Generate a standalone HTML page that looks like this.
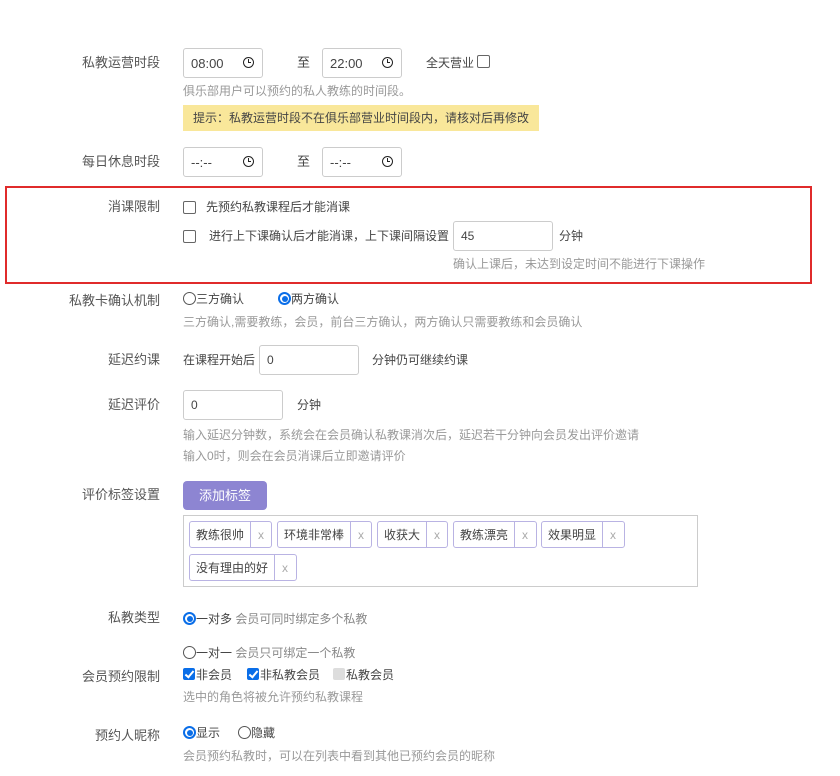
<!DOCTYPE html>
<html><head><meta charset="utf-8"><style>
body{margin:0;width:840px;height:776px;background:#fff;position:relative;overflow:hidden;font-family:"Liberation Sans","Noto Sans CJK SC",sans-serif;color:#444}
.a{position:absolute;white-space:nowrap;line-height:16px}
.l{font-size:13px;color:#555;text-align:right;width:160px;left:0}
.h{font-size:12px;color:#999}
.s{font-size:12px;color:#444}
.in{position:absolute;border:1px solid #ccc;border-radius:3px;box-sizing:border-box;font-size:13px;color:#444;padding-left:7px;display:flex;align-items:center}
.clk{position:absolute;right:8px;top:8px;width:9px;height:9px;border:1.6px solid #222;border-radius:50%}
.clk:after{content:"";position:absolute;left:3.5px;top:1px;width:2.5px;height:3px;border-left:1.5px solid #222;border-bottom:1.5px solid #222}
.cb{position:absolute;width:11px;height:11px;border:1px solid #666;border-radius:2px;background:#fff}
.cbc{position:absolute;width:12px;height:12px;border-radius:2px;background:#0a6ee8}
.cbc:after{content:"";position:absolute;left:4px;top:1px;width:3px;height:7px;border-right:2px solid #fff;border-bottom:2px solid #fff;transform:rotate(40deg)}
.rd{position:absolute;width:11px;height:11px;border:1px solid #555;border-radius:50%;background:#fff}
.rdc{position:absolute;width:9px;height:9px;border:2px solid #0a6ee8;border-radius:50%;background:#fff}
.rdc:after{content:"";position:absolute;left:1.5px;top:1.5px;width:6px;height:6px;border-radius:50%;background:#0a6ee8}
.tag{position:absolute;height:27px;border:1px solid #b9b3e3;border-radius:3px;box-sizing:border-box;font-size:12px;display:flex}
.tag span{padding:0 6px;display:flex;align-items:center;border-right:1px solid #b9b3e3}
.tag i{font-style:normal;color:#aaa;width:20px;display:flex;align-items:center;justify-content:center;font-size:12px}
</style></head><body>

<div class="a l" style="top:55px">私教运营时段</div>
<div class="in" style="left:183px;top:48px;width:80px;height:30px">08:00<div class="clk"></div></div>
<div class="a s" style="left:297px;top:55px;font-size:13px">至</div>
<div class="in" style="left:322px;top:48px;width:80px;height:30px">22:00<div class="clk"></div></div>
<div class="a s" style="left:426px;top:55px;font-size:12px">全天营业</div>
<div class="cb" style="left:477px;top:55px"></div>
<div class="a h" style="left:183px;top:83px">俱乐部用户可以预约的私人教练的时间段。</div>
<div class="a" style="left:183px;top:105px;width:356px;height:26px;background:#f9e79a"></div>
<div class="a s" style="left:193px;top:110px">提示：私教运营时段不在俱乐部营业时间段内，请核对后再修改</div>

<div class="a l" style="top:154px">每日休息时段</div>
<div class="in" style="left:183px;top:147px;width:80px;height:30px">--:--<div class="clk"></div></div>
<div class="a s" style="left:297px;top:154px;font-size:13px">至</div>
<div class="in" style="left:322px;top:147px;width:80px;height:30px">--:--<div class="clk"></div></div>

<div class="a" style="left:5px;top:186px;width:803px;height:94px;border:2px solid #e02b2b"></div>
<div class="a l" style="top:199px">消课限制</div>
<div class="cb" style="left:183px;top:201px"></div>
<div class="a s" style="left:206px;top:199px">先预约私教课程后才能消课</div>
<div class="cb" style="left:183px;top:230px"></div>
<div class="a s" style="left:209px;top:228px">进行上下课确认后才能消课，上下课间隔设置</div>
<div class="in" style="left:453px;top:221px;width:100px;height:30px;font-size:12px">45</div>
<div class="a s" style="left:559px;top:228px">分钟</div>
<div class="a h" style="left:453px;top:256px">确认上课后，未达到设定时间不能进行下课操作</div>

<div class="a l" style="top:293px">私教卡确认机制</div>
<div class="rd" style="left:183px;top:292px"></div>
<div class="a s" style="left:196px;top:291px">三方确认</div>
<div class="rdc" style="left:278px;top:292px"></div>
<div class="a s" style="left:291px;top:291px">两方确认</div>
<div class="a h" style="left:183px;top:314px">三方确认,需要教练，会员，前台三方确认，两方确认只需要教练和会员确认</div>

<div class="a l" style="top:352px">延迟约课</div>
<div class="a s" style="left:183px;top:352px">在课程开始后</div>
<div class="in" style="left:259px;top:345px;width:100px;height:30px;font-size:12px">0</div>
<div class="a s" style="left:372px;top:352px">分钟仍可继续约课</div>

<div class="a l" style="top:397px">延迟评价</div>
<div class="in" style="left:183px;top:390px;width:100px;height:30px;font-size:12px">0</div>
<div class="a s" style="left:297px;top:397px">分钟</div>
<div class="a h" style="left:183px;top:427px">输入延迟分钟数，系统会在会员确认私教课消次后，延迟若干分钟向会员发出评价邀请</div>
<div class="a h" style="left:183px;top:448px">输入0时，则会在会员消课后立即邀请评价</div>

<div class="a l" style="top:487px">评价标签设置</div>
<div class="a" style="left:183px;top:481px;width:84px;height:29px;background:#8d85d2;border-radius:4px;color:#fff;font-size:13px;line-height:29px;text-align:center">添加标签</div>
<div class="a" style="left:183px;top:515px;width:515px;height:72px;border:1px solid #ccc;box-sizing:border-box"></div>
<div class="tag" style="left:189px;top:521px;width:83px"><span>教练很帅</span><i>x</i></div>
<div class="tag" style="left:277px;top:521px;width:95px"><span>环境非常棒</span><i>x</i></div>
<div class="tag" style="left:377px;top:521px;width:71px"><span>收获大</span><i>x</i></div>
<div class="tag" style="left:453px;top:521px;width:84px"><span>教练漂亮</span><i>x</i></div>
<div class="tag" style="left:541px;top:521px;width:84px"><span>效果明显</span><i>x</i></div>
<div class="tag" style="left:189px;top:554px;width:108px"><span>没有理由的好</span><i>x</i></div>

<div class="a l" style="top:610px">私教类型</div>
<div class="rdc" style="left:183px;top:612px"></div>
<div class="a s" style="left:196px;top:611px">一对多 <span style="color:#888">会员可同时绑定多个私教</span></div>
<div class="rd" style="left:183px;top:646px"></div>
<div class="a s" style="left:196px;top:645px">一对一 <span style="color:#888">会员只可绑定一个私教</span></div>

<div class="a l" style="top:669px">会员预约限制</div>
<div class="cbc" style="left:183px;top:668px"></div>
<div class="a s" style="left:196px;top:667px">非会员</div>
<div class="cbc" style="left:247px;top:668px"></div>
<div class="a s" style="left:260px;top:667px">非私教会员</div>
<div class="a" style="left:333px;top:668px;width:12px;height:12px;background:#ddd;border-radius:2px"></div>
<div class="a s" style="left:346px;top:667px">私教会员</div>
<div class="a h" style="left:183px;top:689px">选中的角色将被允许预约私教课程</div>

<div class="a l" style="top:728px">预约人昵称</div>
<div class="rdc" style="left:183px;top:726px"></div>
<div class="a s" style="left:196px;top:725px">显示</div>
<div class="rd" style="left:238px;top:726px"></div>
<div class="a s" style="left:251px;top:725px">隐藏</div>
<div class="a h" style="left:183px;top:748px">会员预约私教时，可以在列表中看到其他已预约会员的昵称</div>
</body></html>
